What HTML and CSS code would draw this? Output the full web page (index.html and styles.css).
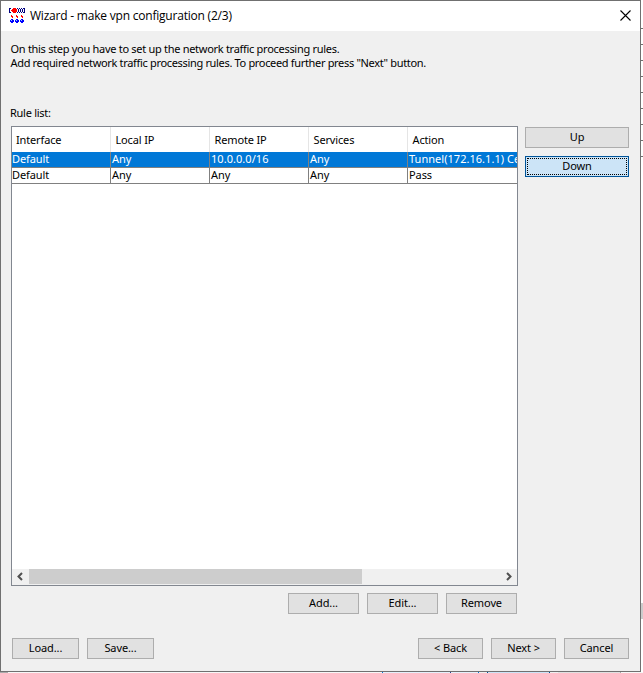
FILE: index.html
```html
<!DOCTYPE html>
<html lang="en">
<head>
<meta charset="utf-8">
<title>Wizard - make vpn configuration (2/3)</title>
<link rel="stylesheet" href="styles.css">
</head>
<body>
<div class="desktop">
  <main class="window">
    <header class="titlebar">
      <svg class="app-icon" width="16" height="16" viewBox="0 0 16 16" shape-rendering="crispEdges">
        <path fill="#000080" d="M0 0h2v1H1v3h1v1H0zM8 0h1v1h1v3H9v1H8V4h1V1H8zM10 0h1v1h1v3h-1v1h-1V4h1V1h-1zM12 0h1v1h1v3h-1v1h-1V4h1V1h-1zM14 0h2v5h-2V4h1V1h-1z"/>
        <path fill="#f00" d="M4 0h3v1h1v3H7v1H4V4H3V3H2V2h1V1h1zM2 7h1v1h1v2H3V9H2zM7 7h1v1h1v2H8V9H7zM12 7h1v1h1v2h-1V9h-1z"/>
        <path fill="#00f" d="M2 11h2v1h1v2H4v1H2v-1H1v-2h1zM7 11h2v1h1v2H9v1H7v-1H6v-2h1zM12 11h2v1h1v2h-1v1h-2v-1h-1v-2h1z"/>
        <path fill="#8cf" d="M2 12h1v1H2zM7 12h1v1H7zM12 12h1v1h-1z"/>
      </svg>
      <h1 class="title">Wizard - make vpn configuration (2/3)</h1>
      <svg class="close" width="11" height="11" viewBox="0 0 11 11"><path d="M.5 .5l10 10M10.5 .5l-10 10" fill="none" stroke="#000" stroke-width="1.1"/></svg>
    </header>
    <section class="intro">
      <p class="line-one">On this step you have to set up the network traffic processing rules.</p>
      <p class="line-two">Add required network traffic processing rules. To proceed further press "Next" button.</p>
    </section>
    <p class="list-label">Rule list:</p>
    <div class="content">
      <div class="list">
        <div class="row head"><span>Interface</span><span>Local IP</span><span>Remote IP</span><span>Services</span><span>Action</span></div>
        <div class="row selected"><span>Default</span><span>Any</span><span class="ip">10.0.0.0/16</span><span>Any</span><span class="tunnel">Tunnel(172.16.1.1) Ce</span></div>
        <div class="row"><span>Default</span><span>Any</span><span>Any</span><span>Any</span><span>Pass</span></div>
        <div class="scrollbar">
          <svg class="arrow" width="17" height="15" viewBox="0 0 17 15"><path d="M10 4L6.500 7.500L10 11" fill="none" stroke="#505050" stroke-width="2"/></svg>
          <div class="thumb"></div>
          <svg class="arrow arrow-right" width="17" height="15" viewBox="0 0 17 15"><path d="M7 4L10.500 7.500L7 11" fill="none" stroke="#505050" stroke-width="2"/></svg>
        </div>
      </div>
      <div class="order">
        <button class="btn">Up</button>
        <button class="btn active">Down</button>
      </div>
    </div>
    <div class="edit-actions">
      <button class="btn">Add...</button>
      <button class="btn">Edit...</button>
      <button class="btn">Remove</button>
    </div>
    <footer class="footer">
      <button class="btn">Load...</button>
      <button class="btn">Save...</button>
      <span class="spacer"></span>
      <button class="btn nav">&lt; Back</button>
      <button class="btn nav">Next &gt;</button>
      <button class="btn nav">Cancel</button>
    </footer>
  </main>
  <div class="behind-right"></div>
  <div class="behind-bottom"></div>
</div>
</body>
</html>
```
FILE: styles.css
```css
* { box-sizing: border-box; }
body { margin: 0; overflow: hidden; font: 11px/14px "Noto Sans", sans-serif; color: #000; }
p, h1 { margin: 0; font-weight: 400; white-space: nowrap; }
svg { display: block; flex: none; }

.desktop {
  width: 643px;
  height: 673px;
  display: grid;
  grid-template-columns: 641px 2px;
  grid-template-rows: 672px 1px;
}
.window {
  display: flex;
  flex-direction: column;
  background: #f0f0f0;
  border: 1px solid #707070;
  overflow: hidden;
}
.behind-right {
  background:
    linear-gradient(#fff, #fff) 0 0 / 2px 28px no-repeat,
    linear-gradient(#fff, #fff) 0 157px / 2px 446px no-repeat,
    linear-gradient(#ccc, #ccc) 0 603px / 2px 16px no-repeat,
    linear-gradient(#fff, #fff) 0 620px / 2px 52px no-repeat,
    repeating-linear-gradient(#fff 0 12px, #707070 12px 13px, #fff 13px 16px);
}
.behind-bottom {
  grid-column: 1 / 3;
  background: linear-gradient(90deg, #aaa 8px, #f7f7f7 8px 382px, #0078d7 382px 383px, #e5f1fb 383px 450px, #27408b 450px 451px, #e5f1fb 451px 478px, #0078d7 478px 479px, #f0f0f0 479px 487px, #005499 487px 488px, #cce4f7 488px 549px, #005499 549px 550px, #f0f0f0 550px 558px, #e1e1e1 558px 620px, #aaa 620px 621px, #f7f7f7 621px);
}

.titlebar { height: 30px; flex: none; display: flex; align-items: center; background: #fff; padding: 0 9px 0 8px; }
.title { flex: 1; margin-left: 5px; font: 12px/16px "Open Sans", sans-serif; letter-spacing: -.21px; }
.close { position: relative; top: -1px; }

.intro { padding: 11px 0 0 9.5px; height: 75px; flex: none; }
.line-one { letter-spacing: -.29px; }
.line-two { letter-spacing: -.33px; }
.list-label { margin-left: 9px; height: 20px; letter-spacing: -.28px; }

.content { display: flex; gap: 7px; height: 460px; flex: none; padding-left: 10px; }
.list {
  width: 507px;
  display: flex;
  flex-direction: column;
  border: 1px solid #828790;
  background: #fff;
}
.row { display: flex; height: 16px; flex: none; overflow: hidden; border-bottom: 1px solid #808080; line-height: 13px; }
.row span { width: 99px; flex: none; border-right: 1px solid #808080; white-space: nowrap; padding-left: 0; letter-spacing: -.1px; }
.row span + span { padding-left: 1px; }
.row span:last-child { border: 0; }
.row .ip { letter-spacing: .05px; }
.row .tunnel { width: 110px; letter-spacing: .03px; }
.head { height: 25px; border: 0; line-height: 25px; }
.head span { border-right-color: #e5e5e5; padding-left: 4px; letter-spacing: -.15px; }
.head span + span { padding-left: 4.5px; }
.selected { background: #0078d7; color: #fff; }
.scrollbar { margin-top: auto; height: 16px; display: flex; background: #f0f0f0; }
.thumb { width: 333px; height: 15px; background: #cdcdcd; }
.arrow-right { margin-left: auto; }

.btn {
  width: 71px;
  height: 21px;
  padding: 0 0 1px;
  border: 1px solid #adadad;
  border-radius: 0;
  background: #e1e1e1;
  color: #000;
  font: inherit;
  line-height: 18px;
  letter-spacing: -.1px;
}
.order { display: flex; flex-direction: column; gap: 8px; padding-top: 1px; }
.order .btn { width: 104px; }
.btn.active { border-color: #005499; background: #cce4f7; outline: 1px dotted #000; outline-offset: -3px; }
.edit-actions { display: flex; gap: 8px; padding: 7px 0 0 287px; height: 28px; flex: none; }
.footer { display: flex; gap: 8px; padding: 24px 11px 0; }
.footer .btn { width: 67px; }
.footer .nav { width: 65px; }
.spacer { flex: 1; }
```
